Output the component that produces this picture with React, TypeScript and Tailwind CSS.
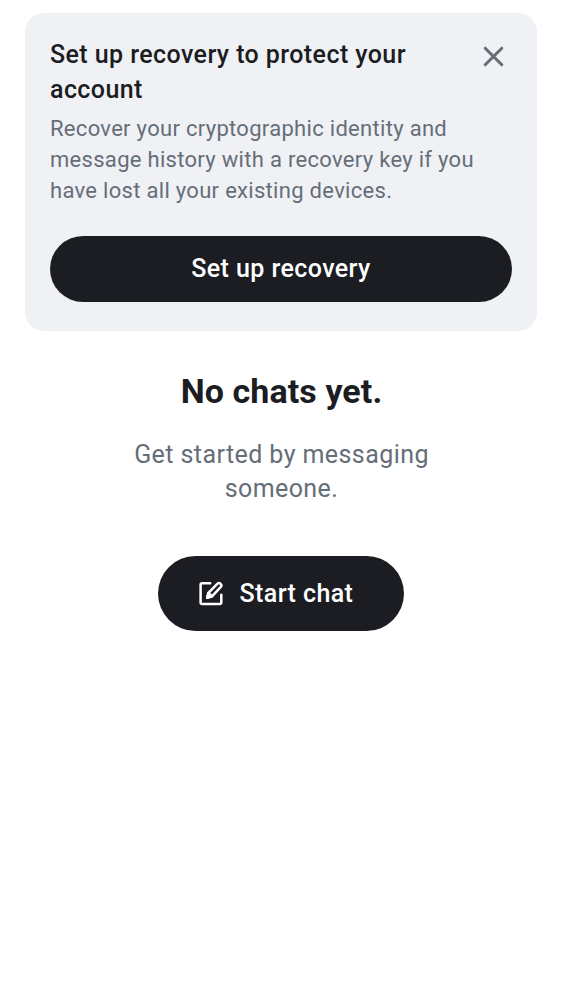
export default function App() {
  return (
    <main className="min-h-screen bg-white px-[25px] pt-[13px] font-['Roboto',sans-serif] text-[#1b1d22]">
      <section className="h-[318px] rounded-[19px] bg-[#f0f1f5] px-[25px] pt-[25px]">
        <div className="flex items-start justify-between">
          <h2 className="w-[380px] text-[25px] leading-[34.5px] font-medium tracking-[0.42px]">
            Set up recovery to protect your<br />account
          </h2>
          <button aria-label="Close" className="mt-[8px] mr-[8px] text-[#656e78]">
            <svg width="21" height="21" viewBox="0 0 21 21" fill="none" stroke="currentColor" strokeWidth="3" strokeLinecap="round">
              <path d="M2.2 2.2l16.6 16.6M18.8 2.2l-16.6 16.6" />
            </svg>
          </button>
        </div>
        <p className="mt-[6px] text-[22px] leading-[31px] tracking-[0.3px] text-[#656e78]">
          Recover your cryptographic identity and<br />message history with a recovery key if you<br />have lost all your existing devices.
        </p>
        <button className="mt-[30px] flex h-[65.5px] w-full items-center justify-center rounded-full bg-[#1b1d22] text-[25px] font-medium tracking-[0.42px] text-white">
          Set up recovery
        </button>
      </section>
      <section className="flex flex-col items-center pt-[37px] text-center">
        <h1 className="pl-px text-[34px] leading-[46px] font-bold tracking-[0.08px]">No chats yet.</h1>
        <p className="mt-[24px] pl-px text-[25px] leading-[34px] tracking-[0.42px] text-[#656e78]">
          Get started by messaging<br />someone.
        </p>
        <button className="mt-[50px] flex h-[75px] w-[246px] items-center gap-[12.5px] rounded-full bg-[#1b1d22] pl-[39px] text-[25px] font-medium tracking-[0.42px] text-white">
          <svg width="30" height="30" viewBox="0 0 30 30" fill="none" stroke="currentColor" strokeWidth="2.5" strokeLinejoin="round" strokeLinecap="round">
            <path d="M13.2 4.2H5.1Q3.6 4.2 3.6 5.7V23.4Q3.6 24.9 5.1 24.9H22.8Q24.3 24.9 24.3 23.4V15.8" />
            <path d="M10.2 18.8l1.3-5L20.5 4.6q1.5-1.3 3.1.2t.2 3.1L15 17.3z" />
            <path d="M10.2 18.8l1.3-5 3.5 3.5z" fill="currentColor" />
          </svg>
          <span>Start chat</span>
        </button>
      </section>
    </main>
  );
}
